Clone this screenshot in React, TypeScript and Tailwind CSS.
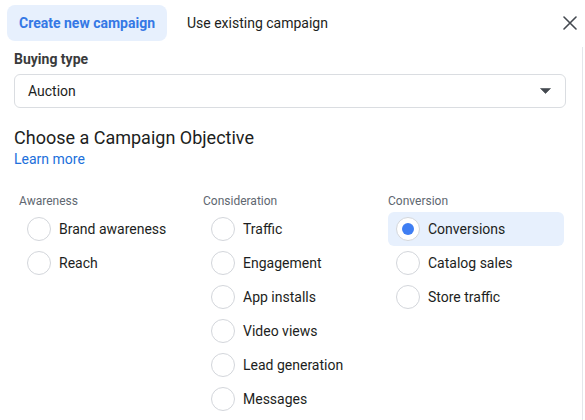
import React, { useState } from "react";

const COLUMNS = [
  { title: "Awareness", items: ["Brand awareness", "Reach"] },
  { title: "Consideration", items: ["Traffic", "Engagement", "App installs", "Video views", "Lead generation", "Messages"] },
  { title: "Conversion", items: ["Conversions", "Catalog sales", "Store traffic"] },
];

export default function App() {
  const [tab, setTab] = useState("new");
  const [objective, setObjective] = useState("Conversions");

  return (
    <div className="w-[585px] h-[420px] overflow-hidden bg-white text-[#1c1e21] font-['Roboto','Liberation_Sans',sans-serif] flex flex-col">
      {/* Header tabs */}
      <div className="h-[47px] shrink-0 flex items-start pt-[5px] pl-[7px] pr-[8px]">
        <button
          onClick={() => setTab("new")}
          className={`h-[36px] px-3 rounded-lg text-[14px] ${tab === "new" ? "bg-[#e7f0fd] text-[#3578e5] font-bold" : "text-[#1c1e21]"}`}
        >
          Create new campaign
        </button>
        <button
          onClick={() => setTab("existing")}
          className={`h-[36px] px-3 ml-2 rounded-lg text-[14px] ${tab === "existing" ? "bg-[#e7f0fd] text-[#3578e5] font-bold" : "text-[#1c1e21]"}`}
        >
          Use existing campaign
        </button>
        <div className="flex-1" />
        <button className="mt-[11px] w-[14px] h-[14px] text-[#444950]">
          <svg viewBox="0 0 14 14" width="14" height="14" fill="none" stroke="currentColor" strokeWidth="1.6" strokeLinecap="round">
            <path d="M1 1 L13 13 M13 1 L1 13" />
          </svg>
        </button>
      </div>

      {/* Body */}
      <div className="flex-1 flex min-h-0">
        <div className="w-[583px] shrink-0 border-r border-[#e4e6eb] pl-[14px] pr-[16px] pt-[2px]">
          <div className="text-[14px] leading-5 font-bold text-[#3a3b3c]">Buying type</div>
          <div className="mt-[5px] h-[34px] border border-[#dadde1] rounded-md flex items-center pl-[13px] pr-[14px]">
            <span className="text-[14px] flex-1">Auction</span>
            <svg width="11" height="6" viewBox="0 0 11 6" className="text-[#444950]">
              <path d="M0.5 0.5 H10.5 L5.5 5.5 Z" fill="currentColor" stroke="currentColor" strokeLinejoin="round" strokeWidth="0.6" />
            </svg>
          </div>

          <div className="mt-[18px] text-[18px] leading-6">Choose a Campaign Objective</div>
          <div className="-mt-[1px] text-[14px] leading-5 text-[#216fdb]">Learn more</div>

          <div className="mt-[24px] ml-[5px] grid grid-cols-[184px_185px_176px]">
            {COLUMNS.map((col) => (
              <div key={col.title} className="flex flex-col">
                <div className="text-[12px] leading-4 text-[#606770]">{col.title}</div>
                <div className="mt-[3px] flex flex-col">
                  {col.items.map((item) => {
                    const selected = item === objective;
                    return (
                      <div
                        key={item}
                        onClick={() => setObjective(item)}
                        className={`h-[34px] flex items-center gap-2 pl-2 rounded-md cursor-default ${selected ? "bg-[#e7f0fd]" : ""}`}
                      >
                        <span className="w-6 h-6 rounded-full border border-[#d3d6db] bg-white flex items-center justify-center shrink-0">
                          {selected && <span className="w-3 h-3 rounded-full bg-[#3f7ef3]" />}
                        </span>
                        <span className="text-[14px]">{item}</span>
                      </div>
                    );
                  })}
                </div>
              </div>
            ))}
          </div>
        </div>
      </div>
    </div>
  );
}
